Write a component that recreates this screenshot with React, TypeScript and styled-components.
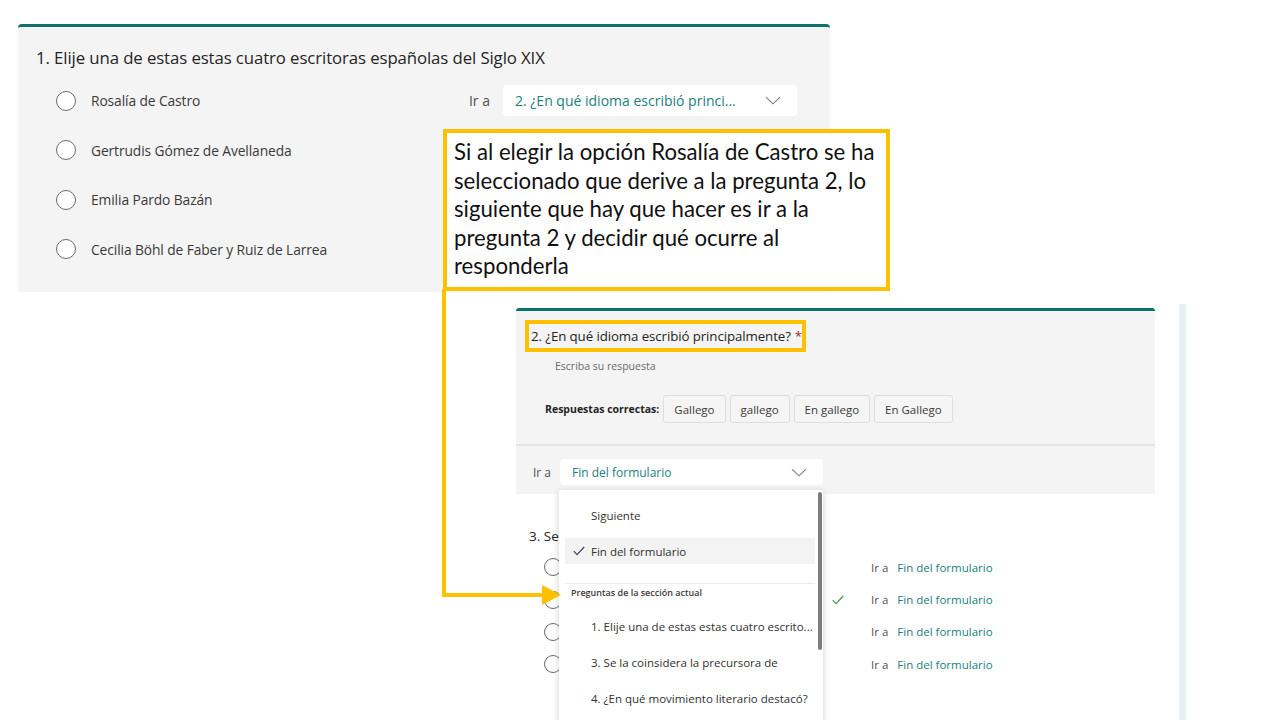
import React from 'react'
import styled, { createGlobalStyle } from 'styled-components'

const TEAL = '#0e706b'
const LINK = '#207f7c'
const YELLOW = '#ffc000'
const UI_FONT = `'Open Sans', 'Noto Sans', sans-serif`
const SLIDE_FONT = `'Lato', 'Liberation Sans', sans-serif`

const GlobalStyle = createGlobalStyle`
  html, body {
    margin: 0;
    padding: 0;
    background: #ffffff;
  }
  body {
    font-family: ${UI_FONT};
  }
`

const Slide = styled.div`
  position: relative;
  width: 1280px;
  height: 720px;
  overflow: hidden;
  background: #ffffff;
  font-family: ${UI_FONT};
  color: #323130;
`

/* ---------- shared bits ---------- */

const Chevron = () => (
  <svg width="16" height="9" viewBox="0 0 16 9" fill="none">
    <path d="M1 1.2 L8 7.8 L15 1.2" stroke="#7a7a7a" strokeWidth="1.1" />
  </svg>
)

const Check = ({ color = '#444' }: { color?: string }) => (
  <svg width="12" height="10" viewBox="0 0 12 10" fill="none">
    <path d="M0.8 5.2 L4 8.6 L11.2 1" stroke={color} strokeWidth="1.2" />
  </svg>
)

const Radio = styled.span<{ size?: number }>`
  display: inline-block;
  flex: none;
  width: ${({ size }) => size ?? 20}px;
  height: ${({ size }) => size ?? 20}px;
  box-sizing: border-box;
  border: 1.5px solid #6b6b6b;
  border-radius: 50%;
  background: #ffffff;
`

const GoTo = styled.div<{ gap?: number }>`
  display: flex;
  align-items: center;
  gap: ${({ gap }) => gap ?? 13}px;
`

const GoToLabel = styled.span<{ size?: number }>`
  font-size: ${({ size }) => size ?? 14}px;
  color: #505050;
`

const Select = styled.div<{ w: number; h: number; size?: number }>`
  display: flex;
  align-items: center;
  justify-content: space-between;
  box-sizing: border-box;
  width: ${({ w }) => w}px;
  height: ${({ h }) => h}px;
  padding: 0 16px 0 12px;
  background: #ffffff;
  border-radius: 4px;
  color: ${LINK};
  font-size: ${({ size }) => size ?? 14}px;
  white-space: nowrap;
`

/* ---------- question 1 card ---------- */

const QuestionCard = styled.section`
  position: absolute;
  left: 18px;
  top: 24px;
  width: 812px;
  height: 268px;
  box-sizing: border-box;
  padding: 19px 33px 0 18px;
  background: #f4f4f4;
  border-top: 3px solid ${TEAL};
  border-radius: 4px 4px 2px 2px;
`

const QuestionTitle = styled.h2`
  margin: 0;
  font-size: 16.8px;
  font-weight: 400;
  line-height: 24px;
  color: #252423;
  letter-spacing: -0.1px;
  white-space: nowrap;
`

const OptionList = styled.div`
  display: flex;
  flex-direction: column;
  margin-top: 6px;
`

const OptionRow = styled.div`
  display: flex;
  align-items: center;
  height: 49.5px;
  padding-left: 20px;
`

const OptionLabel = styled.span`
  margin-left: 15px;
  font-size: 13.8px;
  color: #3b3a39;
  letter-spacing: -0.1px;
`

const RowGoTo = styled(GoTo)`
  margin-left: auto;
`

/* ---------- callout + connector ---------- */

const Callout = styled.div`
  position: absolute;
  left: 443px;
  top: 129px;
  width: 447px;
  height: 162px;
  box-sizing: border-box;
  padding: 5px 0 0 7px;
  border: 4px solid ${YELLOW};
  background: #ffffff;
  font-family: ${SLIDE_FONT};
  font-size: 22.2px;
  line-height: 28.5px;
  color: #111111;
  white-space: nowrap;
  z-index: 3;
`

const Connector = styled.svg`
  position: absolute;
  left: 440px;
  top: 289px;
  z-index: 4;
  overflow: visible;
`

/* ---------- question 2 editor ---------- */

const EditorCard = styled.section`
  position: absolute;
  left: 516px;
  top: 308px;
  width: 639px;
  height: 412px;
  background: #ffffff;
`

const ActiveQuestion = styled.div`
  position: relative;
  background: #f4f4f4;
  border-top: 3px solid ${TEAL};
  border-radius: 3px 3px 0 0;
`

const ActiveBody = styled.div`
  padding: 9px 9px 21px;
`

const Highlight = styled.div`
  display: inline-flex;
  align-items: center;
  box-sizing: border-box;
  height: 32px;
  width: 281px;
  padding-left: 2px;
  border: 4px solid ${YELLOW};
  font-size: 13.3px;
  color: #252423;
  white-space: nowrap;
  letter-spacing: -0.1px;
`

const Required = styled.span`
  margin-left: 4px;
  color: #a4262c;
`

const Hint = styled.div`
  margin: 6px 0 0 30px;
  font-size: 10.5px;
  line-height: 16px;
  color: #6a6a6a;
`

const AnswersRow = styled.div`
  display: flex;
  align-items: center;
  gap: 4px;
  margin: 21px 0 0 20px;
`

const AnswersLabel = styled.span`
  margin-right: 0;
  font-size: 10.5px;
  font-weight: 700;
  color: #252423;
`

const Chip = styled.span`
  display: inline-flex;
  align-items: center;
  height: 28px;
  box-sizing: border-box;
  padding: 0 10px;
  border: 1px solid #dedede;
  border-radius: 3px;
  background: #f5f5f5;
  font-size: 11.5px;
  color: #3b3a39;
`

const ActiveFooter = styled.div`
  display: flex;
  align-items: center;
  height: 50px;
  padding: 4px 0 0 17px;
  box-sizing: border-box;
  border-top: 2px solid #e4e4e4;
`

const Menu = styled.div`
  position: absolute;
  left: 43px;
  top: 182px;
  width: 264px;
  height: 240px;
  padding-top: 12px;
  box-sizing: border-box;
  background: #ffffff;
  border-radius: 2px;
  box-shadow: 0 2px 7px rgba(0, 0, 0, 0.2);
  z-index: 2;
`

const MenuItem = styled.div<{ selected?: boolean }>`
  display: flex;
  align-items: center;
  height: 26px;
  margin: 0 8px 10px 6px;
  padding-left: ${({ selected }) => (selected ? 8 : 26)}px;
  gap: 6px;
  border-radius: 2px;
  background: ${({ selected }) => (selected ? '#f3f3f3' : 'transparent')};
  font-size: 11.5px;
  color: #323130;
  white-space: nowrap;
`

const MenuDivider = styled.div`
  height: 1px;
  margin: 19px 8px 0 6px;
  background: #ececec;
`

const MenuHeader = styled.div`
  padding: 3px 0 0 12px;
  margin-bottom: 14px;
  font-size: 9px;
  line-height: 12px;
  font-weight: 600;
  color: #3b3a39;
`

const ScrollThumb = styled.div`
  position: absolute;
  right: 1px;
  top: 2px;
  width: 4px;
  height: 158px;
  border-radius: 2px;
  background: #7d7d7d;
`

const NextQuestion = styled.div`
  padding: 32px 0 0 13px;
`

const NextTitle = styled.div`
  font-size: 13.5px;
  line-height: 20px;
  color: #252423;
`

const NextOptions = styled.div`
  margin-top: 5px;
`

const NextRow = styled.div`
  display: grid;
  grid-template-columns: 18px 267px 18px auto;
  align-items: center;
  height: 32.4px;
  padding-left: 15px;
`

const CorrectMark = styled.span`
  display: flex;
  justify-content: center;
`

const NextGoTo = styled(GoTo)`
  margin-left: 24px;
`

const RowLink = styled.span`
  color: ${LINK};
  font-size: 11.5px;
`

const SideStrip = styled.div`
  position: absolute;
  left: 1179px;
  top: 304px;
  width: 7px;
  height: 416px;
  background: #e8f0f4;
`

const options = [
  'Rosalía de Castro',
  'Gertrudis Gómez de Avellaneda',
  'Emilia Pardo Bazán',
  'Cecilia Böhl de Faber y Ruiz de Larrea',
]

const answers = ['Gallego', 'gallego', 'En gallego', 'En Gallego']

const calloutLines = [
  'Si al elegir la opción Rosalía de Castro se ha',
  'seleccionado que derive a la pregunta 2, lo',
  'siguiente que hay que hacer es ir a la',
  'pregunta 2 y decidir qué ocurre al',
  'responderla',
]

const sectionQuestions = [
  '1. Elije una de estas estas cuatro escrito...',
  '3. Se la coinsidera la precursora de',
  '4. ¿En qué movimiento literario destacó?',
]

export default function App() {
  return (
    <Slide>
      <GlobalStyle />

      <QuestionCard>
        <QuestionTitle>1. Elije una de estas estas cuatro escritoras españolas del Siglo XIX</QuestionTitle>
        <OptionList>
          {options.map((label, i) => (
            <OptionRow key={label}>
              <Radio />
              <OptionLabel>{label}</OptionLabel>
              {i === 0 && (
                <RowGoTo>
                  <GoToLabel>Ir a</GoToLabel>
                  <Select w={294} h={31}>
                    <span>2. ¿En qué idioma escribió princi...</span>
                    <Chevron />
                  </Select>
                </RowGoTo>
              )}
            </OptionRow>
          ))}
        </OptionList>
      </QuestionCard>

      <EditorCard>
        <ActiveQuestion>
          <ActiveBody>
            <Highlight>
              2. ¿En qué idioma escribió principalmente?<Required>*</Required>
            </Highlight>
            <Hint>Escriba su respuesta</Hint>
            <AnswersRow>
              <AnswersLabel>Respuestas correctas:</AnswersLabel>
              {answers.map(a => (
                <Chip key={a}>{a}</Chip>
              ))}
            </AnswersRow>
          </ActiveBody>
          <ActiveFooter>
            <GoTo gap={9}>
              <GoToLabel size={12}>Ir a</GoToLabel>
              <Select w={263} h={26} size={12}>
                <span>Fin del formulario</span>
                <Chevron />
              </Select>
            </GoTo>
          </ActiveFooter>
        </ActiveQuestion>

        <NextQuestion>
          <NextTitle>3. Se</NextTitle>
          <NextOptions>
            {[0, 1, 2, 3].map(i => (
              <NextRow key={i}>
                <Radio size={18} />
                <span />
                <CorrectMark>{i === 1 && <Check color="#3f9a4a" />}</CorrectMark>
                <NextGoTo gap={9}>
                  <GoToLabel size={11.5}>Ir a</GoToLabel>
                  <RowLink>Fin del formulario</RowLink>
                </NextGoTo>
              </NextRow>
            ))}
          </NextOptions>
        </NextQuestion>

        <Menu>
          <ScrollThumb />
          <MenuItem>Siguiente</MenuItem>
          <MenuItem selected>
            <Check />
            <span>Fin del formulario</span>
          </MenuItem>
          <MenuDivider />
          <MenuHeader>Preguntas de la sección actual</MenuHeader>
          {sectionQuestions.map(q => (
            <MenuItem key={q}>{q}</MenuItem>
          ))}
        </Menu>
      </EditorCard>

      <SideStrip />

      <Callout>
        {calloutLines.map(line => (
          <div key={line}>{line}</div>
        ))}
      </Callout>

      <Connector width="125" height="320" viewBox="0 0 125 320">
        <path d="M4 0 V306 H106" stroke={YELLOW} strokeWidth="4" fill="none" />
        <polygon points="102,296 121,306 102,316" fill={YELLOW} />
      </Connector>
    </Slide>
  )
}
